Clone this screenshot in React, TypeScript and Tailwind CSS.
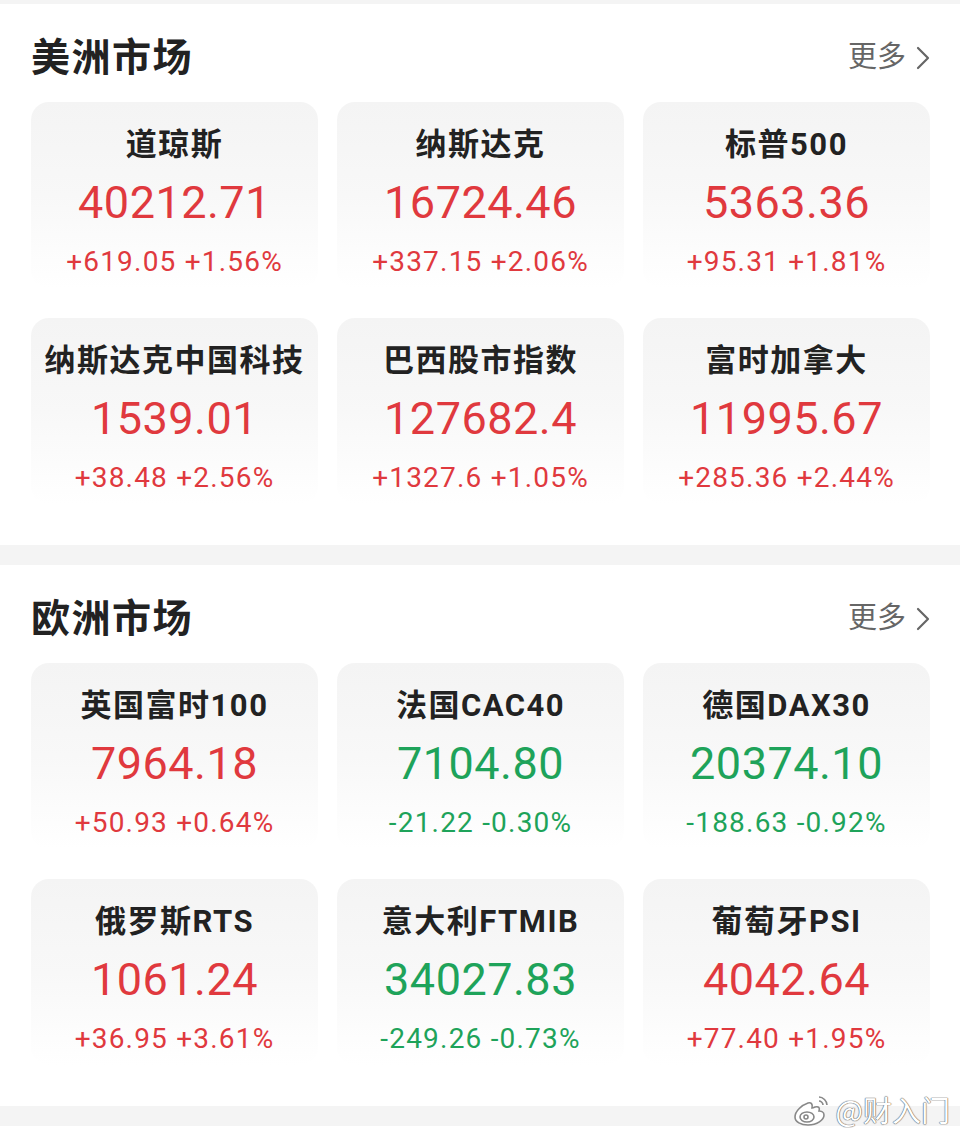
const UP = 'text-[#e0393e]';
const DOWN = 'text-[#1ea35a]';

type Quote = { name: string; value: string; change: string; up: boolean };

const americas: Quote[] = [
  { name: '道琼斯', value: '40212.71', change: '+619.05 +1.56%', up: true },
  { name: '纳斯达克', value: '16724.46', change: '+337.15 +2.06%', up: true },
  { name: '标普500', value: '5363.36', change: '+95.31 +1.81%', up: true },
  { name: '纳斯达克中国科技', value: '1539.01', change: '+38.48 +2.56%', up: true },
  { name: '巴西股市指数', value: '127682.4', change: '+1327.6 +1.05%', up: true },
  { name: '富时加拿大', value: '11995.67', change: '+285.36 +2.44%', up: true },
];

const europe: Quote[] = [
  { name: '英国富时100', value: '7964.18', change: '+50.93 +0.64%', up: true },
  { name: '法国CAC40', value: '7104.80', change: '-21.22 -0.30%', up: false },
  { name: '德国DAX30', value: '20374.10', change: '-188.63 -0.92%', up: false },
  { name: '俄罗斯RTS', value: '1061.24', change: '+36.95 +3.61%', up: true },
  { name: '意大利FTMIB', value: '34027.83', change: '-249.26 -0.73%', up: false },
  { name: '葡萄牙PSI', value: '4042.64', change: '+77.40 +1.95%', up: true },
];

function QuoteCard({ q }: { q: Quote }) {
  const color = q.up ? UP : DOWN;
  return (
    <div className="flex flex-col items-center h-[186px] rounded-[18px] bg-linear-to-b from-[#f4f4f4] via-[#f8f8f8] to-white pt-[25px]">
      <div className="text-[31px] leading-[36px] font-bold text-[#222] tracking-[1.5px] whitespace-nowrap">{q.name}</div>
      <div className={`mt-[14px] text-[45px] leading-[52px] tracking-[0.5px] ${color}`}>{q.value}</div>
      <div className={`mt-[16px] text-[28px] leading-[34px] tracking-[1.2px] ${color}`}>{q.change}</div>
    </div>
  );
}

function Section({ title, quotes }: { title: string; quotes: Quote[] }) {
  return (
    <section className="bg-white pt-[34px] pb-[41px]">
      <div className="flex items-center justify-between h-[40px] pl-[31px] pr-[30px]">
        <h2 className="text-[39px] leading-[40px] font-bold text-[#222] tracking-[1.5px]">{title}</h2>
        <div className="flex items-center gap-[10px] text-[29px] text-[#666]">
          <span>更多</span>
          <svg width="14" height="24" viewBox="0 0 14 24" fill="none" stroke="#666" strokeWidth="2.2" strokeLinecap="round" strokeLinejoin="round">
            <path d="M2 2l10 10L2 22" />
          </svg>
        </div>
      </div>
      <div className="grid grid-cols-3 gap-x-[19px] gap-y-[30px] mt-[24px] pl-[31px] pr-[30px]">
        {quotes.map((q) => (
          <QuoteCard key={q.name} q={q} />
        ))}
      </div>
    </section>
  );
}

export default function App() {
  return (
    <div
      className="relative w-[960px] h-[1133px] overflow-hidden bg-[#f4f4f4] pt-[4px]"
      style={{ fontFamily: 'Roboto, "Noto Sans CJK SC", sans-serif' }}
    >
      <Section title="美洲市场" quotes={americas} />
      <div className="h-[20px]" />
      <Section title="欧洲市场" quotes={europe} />
      <div className="h-[20px]" />
      <div className="h-[20px] bg-white" />
      <div className="absolute right-[10px] top-[1088px] flex items-center gap-[4px] text-[29px] text-white [text-shadow:0_0_1px_#666,0_0_1px_#666,0_0_1px_#666]">
        <svg width="40" height="34" viewBox="0 0 40 34" fill="none" stroke="#888" strokeWidth="1.6">
          <path d="M16 10c-6 2-13 8-13 14 0 5 6 8 13 8 9 0 16-5 16-10 0-3-3-4-5-4 1-3 0-5-4-4-2 1-3 1-3 1 1-4-1-6-4-5z" fill="white" />
          <ellipse cx="15" cy="24" rx="7" ry="5" fill="white" />
          <circle cx="14" cy="24" r="2" fill="white" />
          <path d="M27 4c4 0 8 4 8 8" fill="none" />
          <path d="M27 8c2 0 4 2 4 4" fill="none" />
        </svg>
        <span style={{ fontFamily: '"Noto Sans CJK SC", sans-serif' }}>@财入门</span>
      </div>
    </div>
  );
}
